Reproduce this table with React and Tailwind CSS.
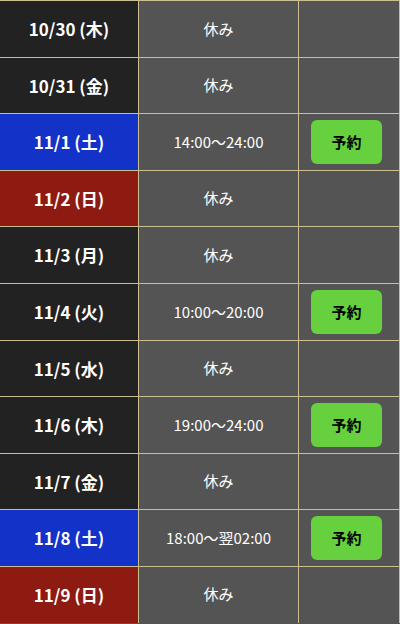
const rows = [
  { date: '10/30 (木)', type: 'day', time: '休み' },
  { date: '10/31 (金)', type: 'day', time: '休み' },
  { date: '11/1 (土)', type: 'sat', time: '14:00〜24:00', open: true },
  { date: '11/2 (日)', type: 'sun', time: '休み' },
  { date: '11/3 (月)', type: 'day', time: '休み' },
  { date: '11/4 (火)', type: 'day', time: '10:00〜20:00', open: true },
  { date: '11/5 (水)', type: 'day', time: '休み' },
  { date: '11/6 (木)', type: 'day', time: '19:00〜24:00', open: true },
  { date: '11/7 (金)', type: 'day', time: '休み' },
  { date: '11/8 (土)', type: 'sat', time: '18:00〜翌02:00', open: true },
  { date: '11/9 (日)', type: 'sun', time: '休み' },
];

const dateBg = {
  day: 'bg-[#232222]',
  sat: 'bg-[#1232c8]',
  sun: 'bg-[#8d1b12]',
};

const Row = ({ row }) => {
  return (
    <div className="flex h-[56.6px] shrink-0 border-t border-[#cbbf92]">
      <div
        className={`w-[139px] flex items-center justify-center text-white font-bold text-[17px] border-r border-[#cbbf92] ${dateBg[row.type]}`}
      >
        {row.date}
      </div>
      <div className="w-[160px] flex items-center justify-center bg-[#555454] text-white text-[15px] border-r border-[#cbbf92]">
        {row.time}
      </div>
      <div className="flex-1 flex items-center justify-center bg-[#555454] border-r border-[#cbbf92]">
        {row.open && (
          <button className="w-[71px] h-[44px] mr-[5px] rounded-[6px] bg-[#66d03e] text-black font-bold text-[15px]">
            予約
          </button>
        )}
      </div>
    </div>
  );
};

export default function App() {
  return (
    <div
      className="w-[400px] h-[624px] overflow-hidden flex flex-col bg-[#555454]"
      style={{ fontFamily: '"Noto Sans CJK JP", sans-serif' }}
    >
      {rows.map((row) => (
        <Row key={row.date} row={row} />
      ))}
    </div>
  );
}
